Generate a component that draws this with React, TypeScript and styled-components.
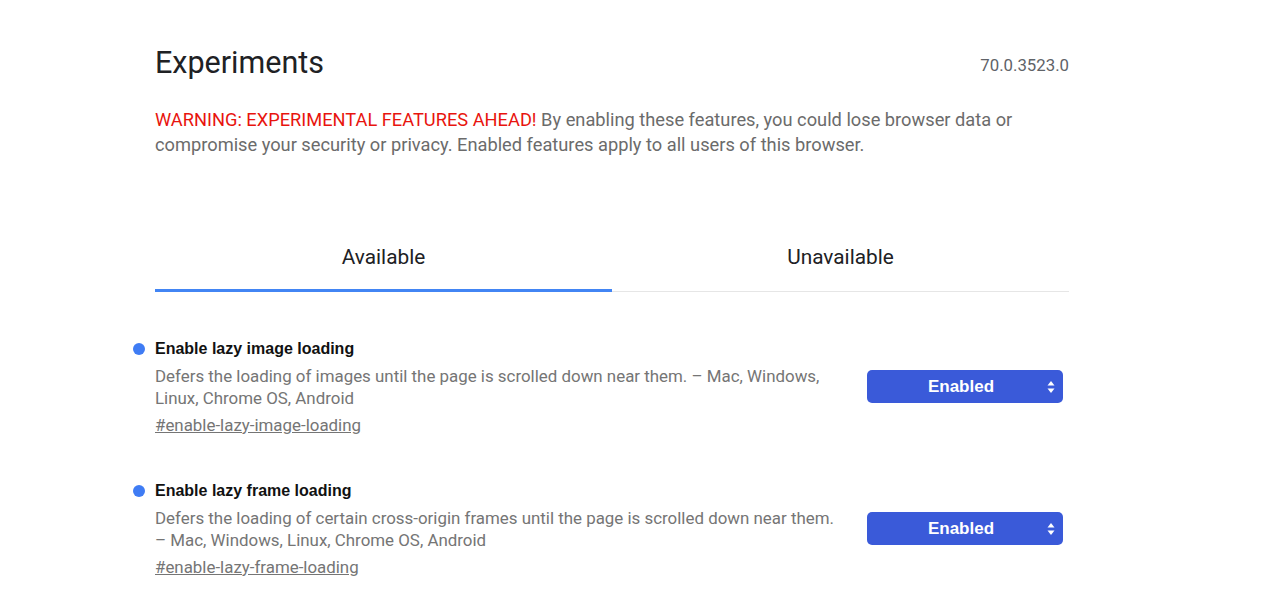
import React from "react";
import styled, { createGlobalStyle } from "styled-components";

const Global = createGlobalStyle`
  html, body { margin: 0; padding: 0; background: #fff; }
  body { font-family: Roboto, "Noto Sans", Arial, sans-serif; }
`;

const Page = styled.div`
  width: 914px;
  margin: 0 0 0 155px;
`;

const Header = styled.div`
  display: flex;
  justify-content: space-between;
  align-items: center;
  padding-top: 44px;
`;

const Title = styled.h1`
  margin: 0;
  font-size: 30.5px;
  font-weight: 400;
  color: #202124;
  line-height: 38px;
`;

const Version = styled.span`
  font-size: 16.8px;
  color: #5f6368;
  margin-top: 4px;
`;

const Warning = styled.p`
  margin: 25px 0 0 0;
  font-size: 18.25px;
  line-height: 25px;
  color: #6b6b6b;
  max-width: 900px;
`;

const Red = styled.span`
  color: #e8140e;
`;

const Tabs = styled.div`
  display: flex;
  margin-top: 85px;
  border-bottom: 1px solid #e6e6e6;
`;

const Tab = styled.div<{ $active?: boolean }>`
  flex: 1;
  text-align: center;
  font-size: 20.8px;
  color: #202124;
  line-height: 26px;
  padding: 2px 0 19px;
  margin-bottom: -1px;
  border-bottom: 3px solid ${(p) => (p.$active ? "#4285f4" : "transparent")};
`;

const List = styled.div`
  display: flex;
  flex-direction: column;
  gap: 44px;
  margin-top: 46px;
`;

const Item = styled.div`
  display: flex;
  justify-content: space-between;
  align-items: flex-start;
  position: relative;
`;

const Dot = styled.span`
  position: absolute;
  left: -22px;
  top: 5px;
  width: 12px;
  height: 12px;
  border-radius: 50%;
  background: #3f7cf4;
`;

const Body = styled.div`
  width: 688px;
`;

const ItemTitle = styled.div`
  font-family: "Liberation Sans", Arial, sans-serif;
  font-weight: 700;
  font-size: 16px;
  line-height: 22px;
  color: #111;
`;

const Desc = styled.div`
  margin-top: 5px;
  font-size: 16.9px;
  line-height: 22px;
  color: #757575;
`;

const Link = styled.a`
  display: inline-block;
  margin-top: 5px;
  font-size: 16.9px;
  line-height: 22px;
  color: #757575;
  text-decoration: underline;
`;

const Select = styled.div`
  margin-top: 32px;
  margin-right: 6px;
  width: 196px;
  height: 33px;
  box-sizing: border-box;
  padding-right: 8px;
  border-radius: 5px;
  background: #3a5ad9;
  color: #fff;
  font-family: "Liberation Sans", Arial, sans-serif;
  font-weight: 700;
  font-size: 17px;
  display: flex;
  align-items: center;
  justify-content: center;
  position: relative;
`;

const Arrows = styled.svg`
  position: absolute;
  right: 8px;
  top: 50%;
  transform: translateY(-50%);
`;

const items = [
  {
    title: "Enable lazy image loading",
    desc: "Defers the loading of images until the page is scrolled down near them. – Mac, Windows, Linux, Chrome OS, Android",
    link: "#enable-lazy-image-loading",
  },
  {
    title: "Enable lazy frame loading",
    desc: "Defers the loading of certain cross-origin frames until the page is scrolled down near them. – Mac, Windows, Linux, Chrome OS, Android",
    link: "#enable-lazy-frame-loading",
  },
];

export default function App() {
  return (
    <>
      <Global />
      <Page>
        <Header>
          <Title>Experiments</Title>
          <Version>70.0.3523.0</Version>
        </Header>
        <Warning>
          <Red>WARNING: EXPERIMENTAL FEATURES AHEAD!</Red> By enabling these
          features, you could lose browser data or compromise your security or
          privacy. Enabled features apply to all users of this browser.
        </Warning>
        <Tabs>
          <Tab $active>Available</Tab>
          <Tab>Unavailable</Tab>
        </Tabs>
        <List>
          {items.map((it) => (
            <Item key={it.link}>
              <Dot />
              <Body>
                <ItemTitle>{it.title}</ItemTitle>
                <Desc>{it.desc}</Desc>
                <Link href={it.link}>{it.link}</Link>
              </Body>
              <Select>
                Enabled
                <Arrows width="8" height="14" viewBox="0 0 8 14">
                  <path d="M4 1 L7.5 5.5 H0.5 Z" fill="#fff" />
                  <path d="M4 13 L7.5 8.5 H0.5 Z" fill="#fff" />
                </Arrows>
              </Select>
            </Item>
          ))}
        </List>
      </Page>
    </>
  );
}
